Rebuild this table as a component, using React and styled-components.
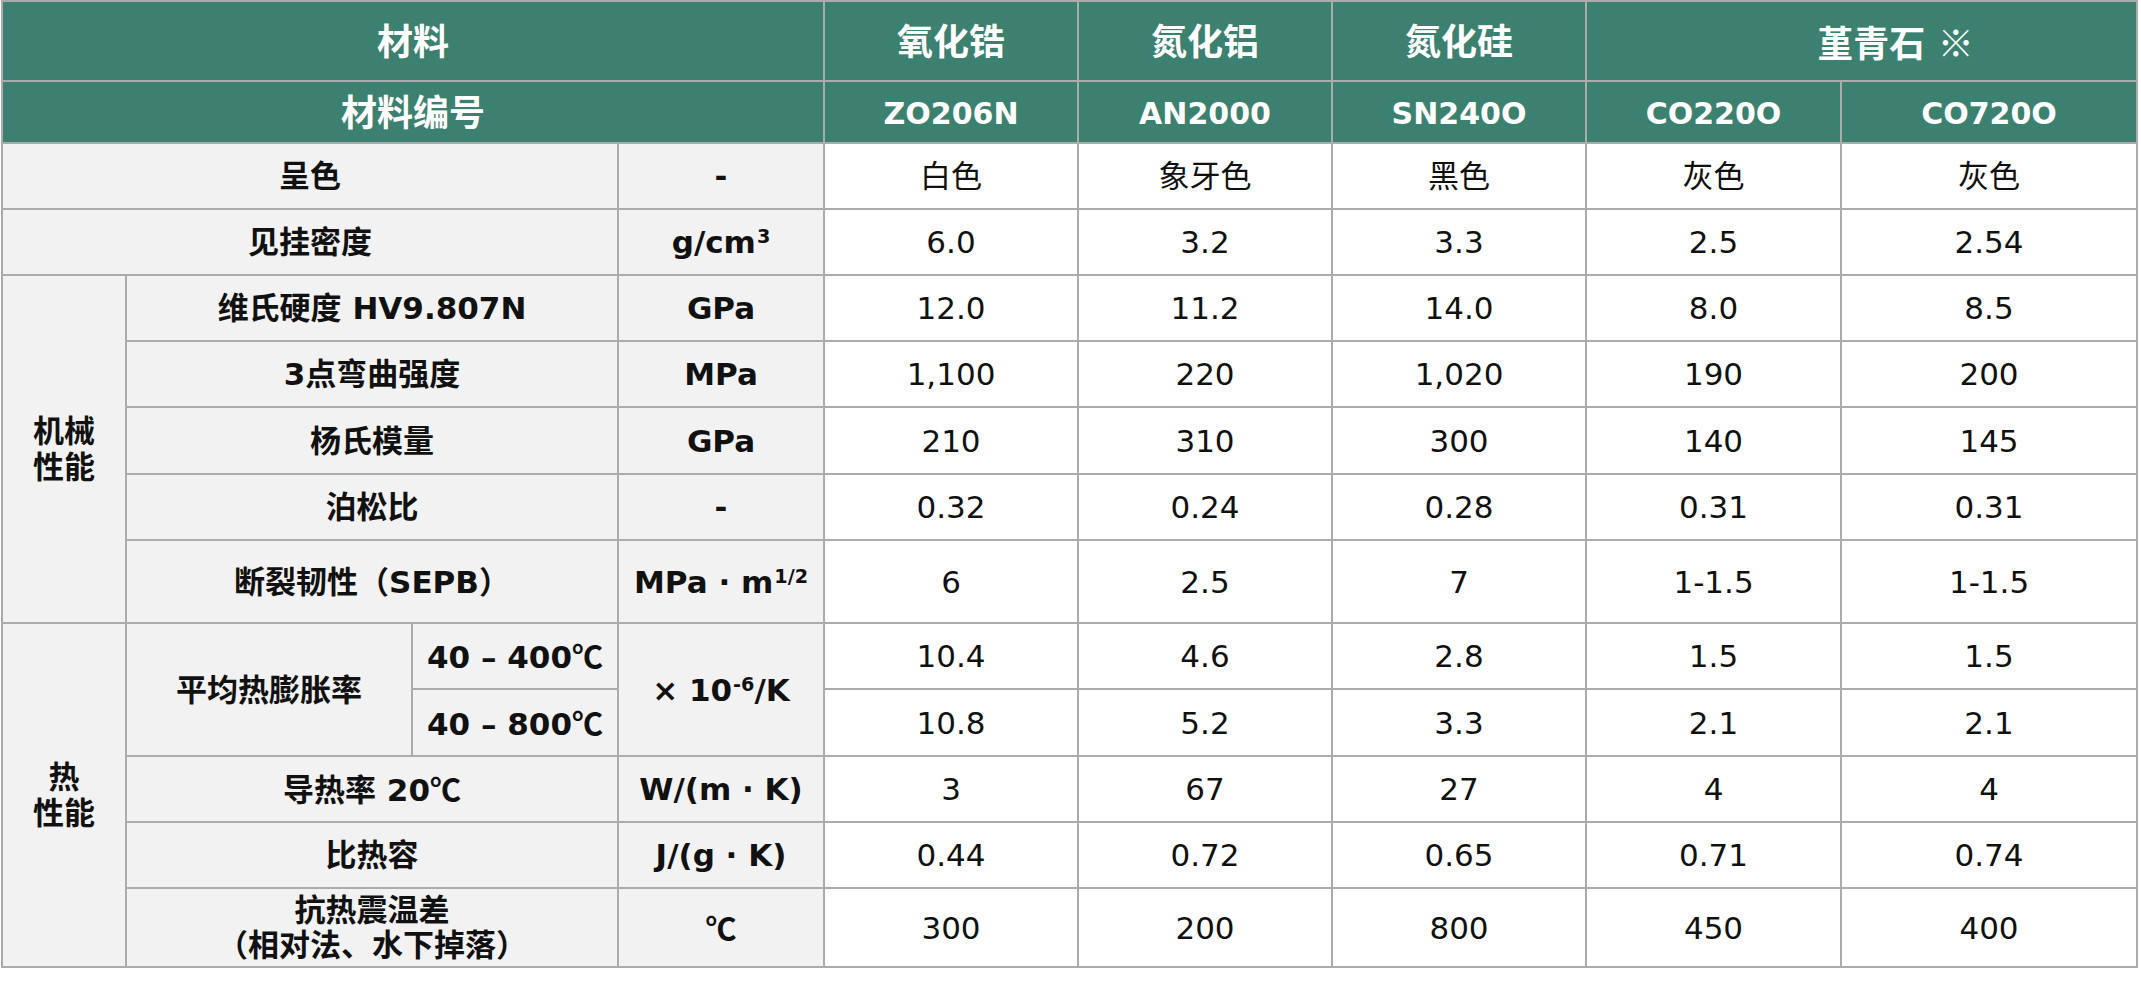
import React from "react";
import styled, { createGlobalStyle } from "styled-components";

const GlobalStyle = createGlobalStyle`
  html, body { margin: 0; padding: 0; background: #ffffff; }
`;

const BORDER = "2px solid #ababab";
const GREEN = "#3c816f";

const Page = styled.div`
  padding: 0 0 0 1px;
`;

const Table = styled.table`
  border-collapse: collapse;
  table-layout: fixed;
  width: 2137px;
  font-family: "DejaVu Sans", Verdana, "Noto Sans CJK SC", sans-serif;
  font-size: 31px;
  line-height: 36px;
  color: #111111;
`;

const Row = styled.tr`
  height: ${(p) => p.$h}px;
`;

const HeadCell = styled.th`
  background: ${GREEN};
  color: #ffffff;
  font-weight: 700;
  font-size: ${(p) => p.$size || 30}px;
  line-height: 40px;
  border: ${BORDER};
  text-align: center;
  vertical-align: middle;
  padding: 3px 0 0 ${(p) => p.$indent || 0}px;
`;

const LabelCell = styled.td`
  background: #f2f2f2;
  font-weight: 700;
  border: ${BORDER};
  text-align: center;
  vertical-align: middle;
  padding: 0;
  line-height: ${(p) => (p.$lh ? `${p.$lh}px` : "36px")};
  white-space: nowrap;
`;

const DataCell = styled.td`
  background: #ffffff;
  font-weight: 400;
  border: ${BORDER};
  text-align: center;
  vertical-align: middle;
  padding: 0;
  white-space: nowrap;
`;

const Sup = styled.sup`
  font-size: 0.62em;
  line-height: 0;
  vertical-align: 0.5em;
  margin-left: 1px;
`;

const Cjk = styled.span`
  font-family: "Noto Sans CJK SC", sans-serif;
  font-weight: ${(p) => p.$weight || "inherit"};
`;

const Deg = () => <Cjk>℃</Cjk>;

const colWidths = [124, 286, 206, 206, 254, 254, 254, 255, 296];

const Values = ({ vals }) =>
  vals.map((v, i) => <DataCell key={i}>{v}</DataCell>);

export default function App() {
  return (
    <Page>
      <GlobalStyle />
      <Table>
        <colgroup>
          {colWidths.map((w, i) => (
            <col key={i} style={{ width: w }} />
          ))}
        </colgroup>
        <thead>
          <Row $h={80}>
            <HeadCell colSpan={4} $size={36}>材料</HeadCell>
            <HeadCell $size={36}>氧化锆</HeadCell>
            <HeadCell $size={36}>氮化铝</HeadCell>
            <HeadCell $size={36}>氮化硅</HeadCell>
            <HeadCell colSpan={2} $size={36} $indent={68}>
              堇青石 <Cjk $weight={400}>※</Cjk>
            </HeadCell>
          </Row>
          <Row $h={62}>
            <HeadCell colSpan={4} $size={36}>材料编号</HeadCell>
            <HeadCell>ZO206N</HeadCell>
            <HeadCell>AN2000</HeadCell>
            <HeadCell>SN240O</HeadCell>
            <HeadCell>CO220O</HeadCell>
            <HeadCell>CO720O</HeadCell>
          </Row>
        </thead>
        <tbody>
          <Row $h={66}>
            <LabelCell colSpan={3}>呈色</LabelCell>
            <LabelCell>-</LabelCell>
            <Values vals={["白色", "象牙色", "黑色", "灰色", "灰色"]} />
          </Row>
          <Row $h={66}>
            <LabelCell colSpan={3}>见挂密度</LabelCell>
            <LabelCell>
              g/cm<Sup>3</Sup>
            </LabelCell>
            <Values vals={["6.0", "3.2", "3.3", "2.5", "2.54"]} />
          </Row>
          <Row $h={66}>
            <LabelCell rowSpan={5} $lh={36}>
              机械
              <br />
              性能
            </LabelCell>
            <LabelCell colSpan={2}>维氏硬度 HV9.807N</LabelCell>
            <LabelCell>GPa</LabelCell>
            <Values vals={["12.0", "11.2", "14.0", "8.0", "8.5"]} />
          </Row>
          <Row $h={66}>
            <LabelCell colSpan={2}>3点弯曲强度</LabelCell>
            <LabelCell>MPa</LabelCell>
            <Values vals={["1,100", "220", "1,020", "190", "200"]} />
          </Row>
          <Row $h={67}>
            <LabelCell colSpan={2}>杨氏模量</LabelCell>
            <LabelCell>GPa</LabelCell>
            <Values vals={["210", "310", "300", "140", "145"]} />
          </Row>
          <Row $h={66}>
            <LabelCell colSpan={2}>泊松比</LabelCell>
            <LabelCell>-</LabelCell>
            <Values vals={["0.32", "0.24", "0.28", "0.31", "0.31"]} />
          </Row>
          <Row $h={83}>
            <LabelCell colSpan={2}>断裂韧性（SEPB）</LabelCell>
            <LabelCell>
              MPa · m<Sup>1/2</Sup>
            </LabelCell>
            <Values vals={["6", "2.5", "7", "1-1.5", "1-1.5"]} />
          </Row>
          <Row $h={66}>
            <LabelCell rowSpan={6} $lh={36}>
              热
              <br />
              性能
            </LabelCell>
            <LabelCell rowSpan={2}>平均热膨胀率</LabelCell>
            <LabelCell>
              40 – 400<Deg />
            </LabelCell>
            <LabelCell rowSpan={2}>
              × 10<Sup>-6</Sup>/K
            </LabelCell>
            <Values vals={["10.4", "4.6", "2.8", "1.5", "1.5"]} />
          </Row>
          <Row $h={67}>
            <LabelCell>
              40 – 800<Deg />
            </LabelCell>
            <Values vals={["10.8", "5.2", "3.3", "2.1", "2.1"]} />
          </Row>
          <Row $h={66}>
            <LabelCell colSpan={2}>
              导热率 20<Deg />
            </LabelCell>
            <LabelCell>W/(m · K)</LabelCell>
            <Values vals={["3", "67", "27", "4", "4"]} />
          </Row>
          <Row $h={66}>
            <LabelCell colSpan={2}>比热容</LabelCell>
            <LabelCell>J/(g · K)</LabelCell>
            <Values vals={["0.44", "0.72", "0.65", "0.71", "0.74"]} />
          </Row>
          <Row $h={79}>
            <LabelCell colSpan={2} $lh={35}>
              抗热震温差
              <br />
              （相对法、水下掉落）
            </LabelCell>
            <LabelCell>
              <Deg />
            </LabelCell>
            <Values vals={["300", "200", "800", "450", "400"]} />
          </Row>
        </tbody>
      </Table>
    </Page>
  );
}
